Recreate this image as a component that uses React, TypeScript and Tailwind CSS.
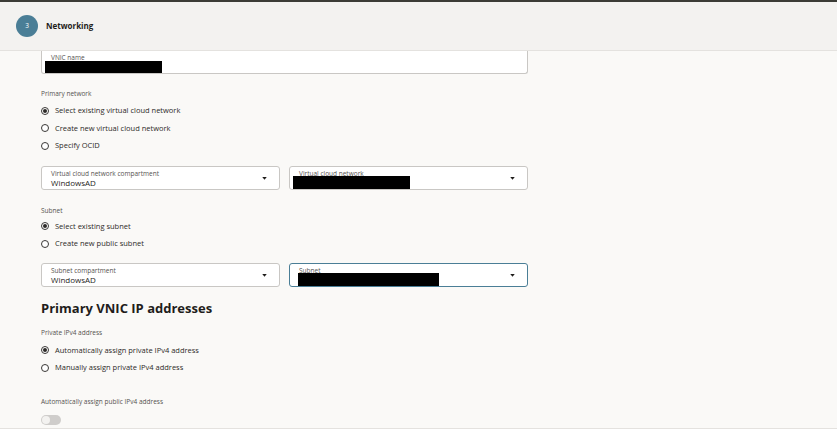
import React from "react";

const font = { fontFamily: '"Open Sans", "Noto Sans", Arial, sans-serif' };

function Radio({ label, checked }: { label: string; checked?: boolean }) {
  return (
    <div className="flex h-[17.5px] items-center gap-[6px]">
      <span className="flex h-[8px] w-[8px] items-center justify-center rounded-full border border-[#3a3836] bg-white">
        {checked && <span className="h-[4px] w-[4px] rounded-full bg-[#2c2a28]" />}
      </span>
      <span className="text-[7.5px] text-[#2c2a28]">{label}</span>
    </div>
  );
}

function Select({
  label,
  value,
  redact,
  focused,
}: {
  label: string;
  value?: string;
  redact?: string;
  focused?: boolean;
}) {
  return (
    <div
      className={`relative flex h-[24px] flex-1 flex-col rounded-[3px] border bg-white pl-[9px] pr-[12px] ${
        focused ? "border-[#4a7e96]" : "border-[#c9c7c4]"
      }`}
    >
      <span className="mt-[2px] text-[6.5px] leading-[9px] text-[#55524f]">{label}</span>
      {value && <span className="text-[8px] leading-[10px] text-[#1f1d1b]">{value}</span>}
      {redact && <span className={`absolute bottom-0 left-[3px] h-[13px] bg-black ${redact}`} />}
      <svg
        className="absolute right-[12px] top-[10px]"
        width="5"
        height="3"
        viewBox="0 0 6 4"
      >
        <path d="M0 0h6L3 3.5z" fill="#1f1d1b" />
      </svg>
    </div>
  );
}

export default function App() {
  return (
    <div className="h-[432px] w-[840px] overflow-hidden bg-white" style={font}>
      <div className="h-[428px] w-[837px] border-t-2 border-[#3b3b36] bg-[#faf9f7]">
        <div className="flex h-[49px] items-center border-b border-[#e4e2df] bg-[#f3f2f0] pl-[16px]">
          <div className="flex h-[22px] w-[22px] items-center justify-center rounded-full bg-[#4a7e96] text-[6.5px] text-white">
            3
          </div>
          <span className="ml-[8px] text-[8px] font-bold text-[#1f1d1b]">Networking</span>
        </div>

        <div className="w-[528px] pl-[41px]">
          <div className="relative h-[23px] rounded-b-[3px] border border-t-0 border-[#c9c7c4] bg-white pl-[9px]">
            <span className="block pt-[2px] text-[6.5px] leading-[9px] text-[#55524f]">VNIC name</span>
            <span className="absolute bottom-0 left-[3px] h-[12px] w-[117px] bg-black" />
          </div>

          <div className="mt-[15px] h-[10px] text-[6.5px] leading-[10px] text-[#55524f]">Primary network</div>
          <div className="mt-[3px]">
            <Radio label="Select existing virtual cloud network" checked />
            <Radio label="Create new virtual cloud network" />
            <Radio label="Specify OCID" />
          </div>

          <div className="mt-[11px] flex gap-[9px]">
            <Select label="Virtual cloud network compartment" value="WindowsAD" />
            <Select label="Virtual cloud network" redact="w-[117px]" />
          </div>

          <div className="mt-[16px] h-[10px] text-[6.5px] leading-[10px] text-[#55524f]">Subnet</div>
          <div className="mt-[2px]">
            <Radio label="Select existing subnet" checked />
            <Radio label="Create new public subnet" />
          </div>

          <div className="mt-[10.5px] flex gap-[9px]">
            <Select label="Subnet compartment" value="WindowsAD" />
            <Select label="Subnet" redact="w-[141px] left-[8px]" focused />
          </div>

          <h2 className="mt-[12px] h-[18px] text-[13px] font-bold leading-[18px] text-[#1f1d1b]">
            Primary VNIC IP addresses
          </h2>

          <div className="mt-[11px] h-[10px] text-[6.5px] leading-[10px] text-[#55524f]">Private IPv4 address</div>
          <div className="mt-[3.5px]">
            <Radio label="Automatically assign private IPv4 address" checked />
            <Radio label="Manually assign private IPv4 address" />
          </div>

          <div className="mt-[20.5px] h-[10px] text-[6.5px] leading-[10px] text-[#55524f]">
            Automatically assign public IPv4 address
          </div>
          <div className="mt-[8px] flex h-[10px] w-[20px] items-center rounded-full bg-[#cfcdcb] px-[1px]">
            <span className="h-[8px] w-[8px] rounded-full bg-[#f3f2f0]" />
          </div>
        </div>
      </div>
      <div className="h-px w-[837px] bg-[#e4e2df]" />
    </div>
  );
}
